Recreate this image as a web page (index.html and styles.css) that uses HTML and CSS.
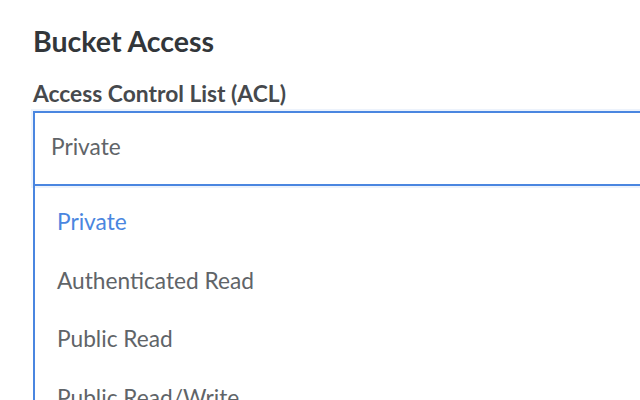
FILE: index.html
```
<!DOCTYPE html>
<html>
<head>
<meta charset="utf-8">
<link rel="stylesheet" href="styles.css">
</head>
<body>
<div class="page">
  <h1 class="title">Bucket Access</h1>
  <div class="field">
    <label class="label">Access Control List (ACL)</label>
    <div class="select">
      <div class="select-value">Private</div>
    </div>
    <ul class="menu">
      <li class="option selected">Private</li>
      <li class="option">Authenticated Read</li>
      <li class="option">Public Read</li>
      <li class="option">Public Read/Write</li>
    </ul>
  </div>
</div>
</body>
</html>
```
FILE: styles.css
```
html, body {
  margin: 0;
  padding: 0;
  background: #ffffff;
  overflow: hidden;
}
body {
  font-family: Lato, "Open Sans", sans-serif;
  width: 640px;
  height: 400px;
}
.page {
  padding: 24px 0 0 33px;
}
.title {
  margin: 0;
  font-size: 28.5px;
  font-weight: 700;
  color: #32363a;
  line-height: 34px;
}
.field {
  margin-top: 21px;
  display: flex;
  flex-direction: column;
}
.label {
  font-size: 22.8px;
  font-weight: 700;
  color: #46494d;
  line-height: 28px;
  margin-bottom: 4px;
}
.select {
  width: 700px;
  height: 75px;
  border: 2px solid #4a86e0;
  box-shadow: 0 0 0 2px rgba(74, 134, 224, 0.1);
  box-sizing: border-box;
  display: flex;
  align-items: center;
  padding-left: 16px;
  padding-bottom: 4px;
}
.select-value {
  font-size: 22.7px;
  color: #606468;
}
.menu {
  list-style: none;
  margin: 0;
  padding: 7px 0 0 22px;
  width: 700px;
  box-sizing: border-box;
  border-left: 2px solid #4a86e0;
}
.option {
  font-size: 22.7px;
  color: #606468;
  height: 58.5px;
  line-height: 58.5px;
  white-space: nowrap;
}
.option.selected {
  color: #4a86e0;
}
```
